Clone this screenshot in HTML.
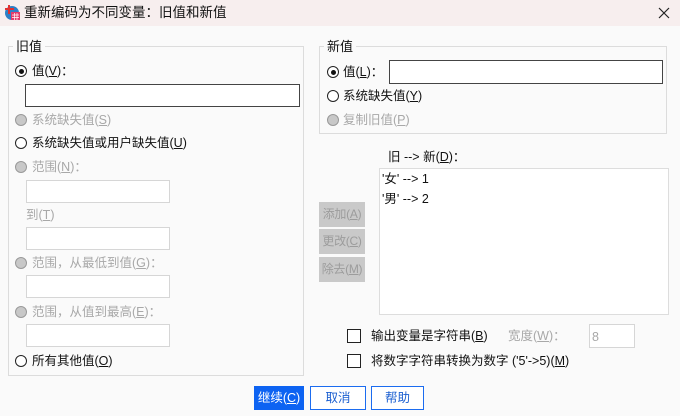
<!DOCTYPE html>
<html><head><meta charset="utf-8"><style>
*{margin:0;padding:0;box-sizing:border-box}
body{width:680px;height:416px;overflow:hidden;background:#fafafa;font-family:"Liberation Sans","Noto Sans CJK SC",sans-serif;font-size:12.5px;color:#111;position:relative}
.a{position:absolute;white-space:nowrap;line-height:16px}
.g{color:#a8a8a8}
u{text-decoration:underline}
.title{position:absolute;left:0;top:0;width:680px;height:26px;background:#f7eeee}
.box{position:absolute;border:1px solid #dcdcdc}
.leg{position:absolute;background:#fafafa;padding:0 3px;line-height:16px;font-size:13px}
.in{position:absolute;background:#fff;border:1px solid #d6d6d6}
.rad{position:absolute;width:12px;height:12px;border-radius:50%;border:1.3px solid #222;background:#fff}
.rad.on::after{content:"";position:absolute;left:2.5px;top:2.5px;width:5px;height:5px;border-radius:50%;background:#111}
.rad.dis{border-color:#999;background:#c8c8c8}
.btn{position:absolute;background:#c9c9c9;color:#9c9c9c;text-align:center;line-height:24px;font-size:12px;letter-spacing:-0.3px}
.cb{position:absolute;width:14px;height:14px;border:1.3px solid #222;background:#fff}
.db{position:absolute;height:24px;border:1px solid #1b6cf0;color:#1b5fd0;background:#fff;text-align:center;line-height:22px}
</style></head><body>
<div class="title"></div>
<svg style="position:absolute;left:4px;top:4px" width="17" height="17" viewBox="0 0 17 17"><circle cx="8" cy="9" r="7" fill="#2d7fc6"/><rect x="7" y="8" width="9" height="8" fill="#e23a6a"/><path d="M1 5h9M5 1v9" stroke="#e03030" stroke-width="2"/><path d="M8 11h7M8 13.5h7M10.5 9v7M13 9v7" stroke="#fff" stroke-width="0.7"/></svg>
<div class="a" style="left:24px;top:5px;font-size:13.5px">重新编码为不同变量：旧值和新值</div>
<svg style="position:absolute;left:658px;top:7px" width="12" height="12"><path d="M1 1L11 11M11 1L1 11" stroke="#222" stroke-width="1.2"/></svg>

<div class="box" style="left:8px;top:46px;width:296px;height:330px"></div>
<div class="leg" style="left:13px;top:39px">旧值</div>
<div class="rad on" style="left:15px;top:65px"></div><div class="a" style="left:32px;top:63px">值(<u>V</u>)：</div>
<div class="in" style="left:25px;top:84px;width:275px;height:23px;border-color:#444"></div>
<div class="rad dis" style="left:15px;top:114px"></div><div class="a g" style="left:32px;top:112px">系统缺失值(<u>S</u>)</div>
<div class="rad" style="left:15px;top:137px"></div><div class="a" style="left:32px;top:135px">系统缺失值或用户缺失值(<u>U</u>)</div>
<div class="rad dis" style="left:15px;top:161px"></div><div class="a g" style="left:32px;top:159px">范围(<u>N</u>)：</div>
<div class="in" style="left:26px;top:180px;width:144px;height:23px"></div>
<div class="a g" style="left:26px;top:207px">到(<u>T</u>)</div>
<div class="in" style="left:26px;top:227px;width:144px;height:23px"></div>
<div class="rad dis" style="left:15px;top:257px"></div><div class="a g" style="left:32px;top:255px">范围，从最低到值(<u>G</u>)：</div>
<div class="in" style="left:26px;top:275px;width:144px;height:23px"></div>
<div class="rad dis" style="left:15px;top:306px"></div><div class="a g" style="left:32px;top:304px">范围，从值到最高(<u>E</u>)：</div>
<div class="in" style="left:26px;top:324px;width:144px;height:23px"></div>
<div class="rad" style="left:15px;top:355px"></div><div class="a" style="left:32px;top:353px">所有其他值(<u>O</u>)</div>

<div class="box" style="left:319px;top:46px;width:348px;height:88px"></div>
<div class="leg" style="left:324px;top:39px">新值</div>
<div class="rad on" style="left:327px;top:66px"></div><div class="a" style="left:343px;top:64px">值(<u>L</u>)：</div>
<div class="in" style="left:389px;top:60px;width:274px;height:24px;border-color:#444"></div>
<div class="rad" style="left:327px;top:90px"></div><div class="a" style="left:343px;top:88px">系统缺失值(<u>Y</u>)</div>
<div class="rad dis" style="left:327px;top:114px"></div><div class="a g" style="left:343px;top:112px">复制旧值(<u>P</u>)</div>

<div class="a" style="left:388px;top:149px">旧 --&gt; 新(<u>D</u>)：</div>
<div class="in" style="left:379px;top:168px;width:290px;height:147px;border-color:#ddd"></div>
<div class="a" style="left:382px;top:171px">'女' --&gt; 1</div>
<div class="a" style="left:382px;top:191px">'男' --&gt; 2</div>
<div class="btn" style="left:319px;top:202px;width:46px;height:25px">添加(<u>A</u>)</div>
<div class="btn" style="left:319px;top:229px;width:46px;height:25px">更改(<u>C</u>)</div>
<div class="btn" style="left:319px;top:257px;width:46px;height:25px">除去(<u>M</u>)</div>

<div class="cb" style="left:347px;top:329px"></div><div class="a" style="left:371px;top:328px">输出变量是字符串(<u>B</u>)</div>
<div class="a g" style="left:508px;top:328px">宽度(<u>W</u>)：</div>
<div class="in" style="left:589px;top:324px;width:46px;height:24px"></div>
<div class="a g" style="left:592px;top:329px">8</div>
<div class="cb" style="left:347px;top:354px"></div><div class="a" style="left:371px;top:353px">将数字字符串转换为数字 ('5'-&gt;5)(<u>M</u>)</div>

<div class="db" style="left:254px;top:386px;width:50px;background:#0d63f2;color:#fff;border-color:#0d63f2">继续(<u>C</u>)</div>
<div class="db" style="left:310px;top:386px;width:56px">取消</div>
<div class="db" style="left:371px;top:386px;width:53px">帮助</div>
</body></html>
